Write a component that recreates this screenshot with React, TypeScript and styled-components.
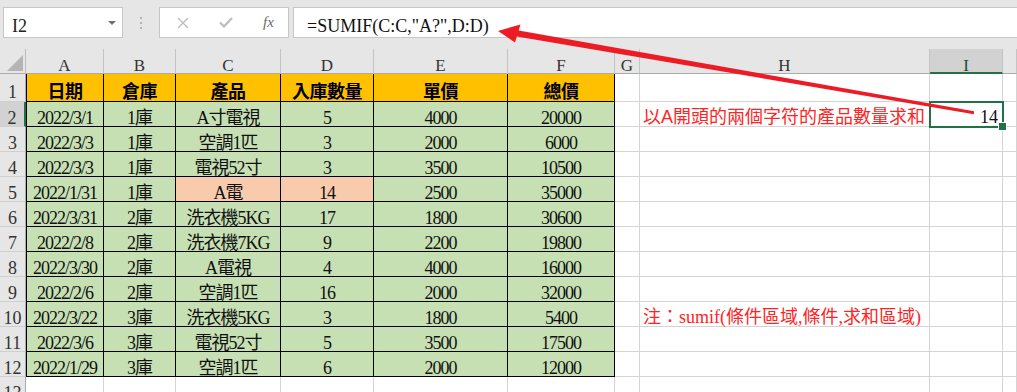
import React from 'react'
import styled, { createGlobalStyle, css } from 'styled-components'

const SERIF = `"Liberation Serif", "Noto Sans CJK TC", serif`
const SANS = `"Liberation Sans", "Noto Sans CJK TC", sans-serif`
const GREEN = '#217346'

const GlobalStyle = createGlobalStyle`
  html, body {
    margin: 0;
    padding: 0;
    background: #fff;
  }
  * {
    box-sizing: border-box;
  }
`

const Page = styled.div`
  position: relative;
  width: 1017px;
  height: 392px;
  overflow: hidden;
  background: #fff;
  font-family: ${SERIF};
`

const TopBar = styled.div`
  display: flex;
  align-items: flex-start;
  height: 49px;
  padding: 7px 0 0 3px;
  background: #e6e6e6;
`

const NameBox = styled.div`
  display: flex;
  justify-content: space-between;
  width: 120px;
  height: 31px;
  padding: 8px 6px 0 8px;
  background: #fff;
  border: 1px solid #c6c6c6;
  font-size: 18px;
  line-height: 20px;
  color: #222;
`

const Caret = styled.span`
  align-self: center;
  margin-top: -8px;
  width: 0;
  height: 0;
  border-left: 4px solid transparent;
  border-right: 4px solid transparent;
  border-top: 4px solid #6f6f6f;
`

const Grip = styled.div`
  display: flex;
  flex-direction: column;
  align-items: center;
  justify-content: center;
  gap: 3px;
  width: 36px;
  height: 31px;
`

const GripDot = styled.span`
  width: 2px;
  height: 2px;
  background: #b4b4b4;
`

const FxBox = styled.div`
  display: grid;
  grid-template-columns: repeat(3, 43px);
  align-items: center;
  justify-items: center;
  width: 130px;
  height: 31px;
  padding-left: 1px;
  background: #fff;
  border: 1px solid #c6c6c6;
`

const FxLabel = styled.span`
  font-family: ${SERIF};
  font-style: italic;
  font-size: 15px;
  color: #6a6a6a;
  margin-top: -1px;
`

const FormulaBox = styled.div`
  flex: 1;
  height: 31px;
  margin-left: 4px;
  padding: 8px 0 0 13px;
  background: #fff;
  border: 1px solid #c6c6c6;
  border-right: none;
  font-size: 18px;
  line-height: 21px;
  color: #111;
  white-space: nowrap;
`

const Sheet = styled.div`
  display: grid;
  grid-template-columns: 26px 78px 72px 105px 93px 134px 107px 25px 290px 73px 1fr;
  grid-template-rows: 25px 28px repeat(12, 25px);
`

const Corner = styled.div`
  display: flex;
  align-items: flex-end;
  justify-content: flex-end;
  padding: 0 2px 2px 0;
  background: #e6e6e6;
  border-right: 1px solid #bdbdbd;
  border-bottom: 1px solid #ababab;
`

const CornerTriangle = styled.span`
  width: 0;
  height: 0;
  border-left: 16px solid transparent;
  border-bottom: 16px solid #b4b4b4;
`

const ColHead = styled.div<{ $selected?: boolean }>`
  padding-top: 7px;
  text-align: center;
  font-size: 17px;
  line-height: 20px;
  color: #333;
  background: ${p => (p.$selected ? '#d2d2d2' : '#e6e6e6')};
  border-right: 1px solid #c4c4c4;
  border-bottom: ${p => (p.$selected ? `2px solid ${GREEN}` : '1px solid #ababab')};
  ${p => p.$selected && css`color: #1d4d30;`}
`

const RowHead = styled.div<{ $selected?: boolean; $tall?: boolean }>`
  padding-top: ${p => (p.$tall ? 8 : 6)}px;
  text-align: center;
  font-size: 18px;
  line-height: 20px;
  color: #333;
  overflow: hidden;
  background: ${p => (p.$selected ? '#d2d2d2' : '#e6e6e6')};
  border-right: ${p => (p.$selected ? `2px solid ${GREEN}` : '1px solid #ababab')};
  border-bottom: 1px solid #cfcfcf;
`

type Fill = 'head' | 'green' | 'peach'

const fills: Record<Fill, string> = {
  head: '#ffc000',
  green: '#c6e0b4',
  peach: '#f8cbad',
}

const Cell = styled.div<{ $fill?: Fill; $first?: boolean; $tall?: boolean }>`
  padding-top: ${p => (p.$tall ? 8 : 6)}px;
  text-align: center;
  font-size: 18px;
  line-height: 20px;
  letter-spacing: -1px;
  white-space: nowrap;
  color: #111;
  background: ${p => (p.$fill ? fills[p.$fill] : '#fff')};
  border-right: 1px solid ${p => (p.$fill ? '#000' : '#d4d4d4')};
  border-bottom: 1px solid ${p => (p.$fill ? '#000' : '#d4d4d4')};
  ${p => p.$first && css`border-left: 1px solid #000;`}
  ${p =>
    p.$fill === 'head' &&
    css`
      font-weight: bold;
      letter-spacing: -0.5px;
      color: #000;
    `}
`

const NoteCell = styled(Cell)<{ $sans?: boolean }>`
  padding-top: 5px;
  padding-left: 3px;
  text-align: left;
  letter-spacing: 0;
  color: #ff2424;
  font-family: ${p => (p.$sans ? SANS : SERIF)};
  overflow: visible;
`

const ActiveCell = styled(Cell)`
  position: relative;
  padding-top: 5px;
  padding-right: 4px;
  text-align: right;
  letter-spacing: 0;

  &::before {
    content: '';
    position: absolute;
    left: -1px;
    top: -1px;
    right: -2px;
    bottom: -2px;
    border: 2px solid ${GREEN};
  }

  &::after {
    content: '';
    position: absolute;
    right: -5px;
    bottom: -5px;
    width: 7px;
    height: 7px;
    background: ${GREEN};
    border: 1px solid #fff;
  }
`

const ArrowLayer = styled.svg`
  position: absolute;
  left: 0;
  top: 0;
  pointer-events: none;
`

const columns = ['A', 'B', 'C', 'D', 'E', 'F', 'G', 'H', 'I']
const header = ['日期', '倉庫', '產品', '入庫數量', '單價', '總價']

const data: string[][] = [
  ['2022/3/1', '1庫', 'A寸電視', '5', '4000', '20000'],
  ['2022/3/3', '1庫', '空調1匹', '3', '2000', '6000'],
  ['2022/3/3', '1庫', '電視52寸', '3', '3500', '10500'],
  ['2022/1/31', '1庫', 'A電', '14', '2500', '35000'],
  ['2022/3/31', '2庫', '洗衣機5KG', '17', '1800', '30600'],
  ['2022/2/8', '2庫', '洗衣機7KG', '9', '2200', '19800'],
  ['2022/3/30', '2庫', 'A電視', '4', '4000', '16000'],
  ['2022/2/6', '2庫', '空調1匹', '16', '2000', '32000'],
  ['2022/3/22', '3庫', '洗衣機5KG', '3', '1800', '5400'],
  ['2022/3/6', '3庫', '電視52寸', '5', '3500', '17500'],
  ['2022/1/29', '3庫', '空調1匹', '6', '2000', '12000'],
]

const peachRow = 3

const CloseIcon = () => (
  <svg width="12" height="12" viewBox="0 0 12 12">
    <path d="M1 1 L11 11 M11 1 L1 11" stroke="#bdbdbd" strokeWidth="1.4" fill="none" />
  </svg>
)

const CheckIcon = () => (
  <svg width="14" height="11" viewBox="0 0 14 11">
    <path d="M1 5.5 L5 9.5 L13 1" stroke="#bdbdbd" strokeWidth="2.2" fill="none" />
  </svg>
)

const Arrow = () => (
  <ArrowLayer width="1017" height="392" viewBox="0 0 1017 392">
    <polygon
      points="498,31 520.5,24.5 518.7,30.5 974,111.3 974,114.3 516.8,36.5 515,42.5"
      fill="#ed1c24"
    />
  </ArrowLayer>
)

const extraCells = (row: number) => {
  if (row === 2) {
    return [
      <Cell key="g" />,
      <NoteCell key="h" $sans>以A開頭的兩個字符的產品數量求和</NoteCell>,
      <ActiveCell key="i">14</ActiveCell>,
      <Cell key="j" />,
    ]
  }
  if (row === 10) {
    return [
      <Cell key="g" />,
      <NoteCell key="h">注：sumif(條件區域,條件,求和區域)</NoteCell>,
      <Cell key="i" />,
      <Cell key="j" />,
    ]
  }
  return [<Cell key="g" />, <Cell key="h" />, <Cell key="i" />, <Cell key="j" />]
}

export default function App() {
  return (
    <Page>
      <GlobalStyle />
      <TopBar>
        <NameBox>
          <span>I2</span>
          <Caret />
        </NameBox>
        <Grip>
          <GripDot />
          <GripDot />
          <GripDot />
        </Grip>
        <FxBox>
          <CloseIcon />
          <CheckIcon />
          <FxLabel>fx</FxLabel>
        </FxBox>
        <FormulaBox>=SUMIF(C:C,"A?",D:D)</FormulaBox>
      </TopBar>

      <Sheet>
        <Corner>
          <CornerTriangle />
        </Corner>
        {columns.map(c => (
          <ColHead key={c} $selected={c === 'I'}>
            {c}
          </ColHead>
        ))}
        <ColHead />

        <RowHead $tall>1</RowHead>
        {header.map((h, i) => (
          <Cell key={h} $fill="head" $first={i === 0} $tall>
            {h}
          </Cell>
        ))}
        <Cell />
        <Cell />
        <Cell />
        <Cell />

        {data.map((row, r) => (
          <React.Fragment key={r}>
            <RowHead $selected={r === 0}>{r + 2}</RowHead>
            {row.map((v, c) => (
              <Cell
                key={c}
                $fill={r === peachRow && (c === 2 || c === 3) ? 'peach' : 'green'}
                $first={c === 0}
              >
                {v}
              </Cell>
            ))}
            {extraCells(r + 2)}
          </React.Fragment>
        ))}

        <RowHead>13</RowHead>
        {Array.from({ length: 10 }, (_, i) => (
          <Cell key={i} />
        ))}
      </Sheet>
      <Arrow />
    </Page>
  )
}
